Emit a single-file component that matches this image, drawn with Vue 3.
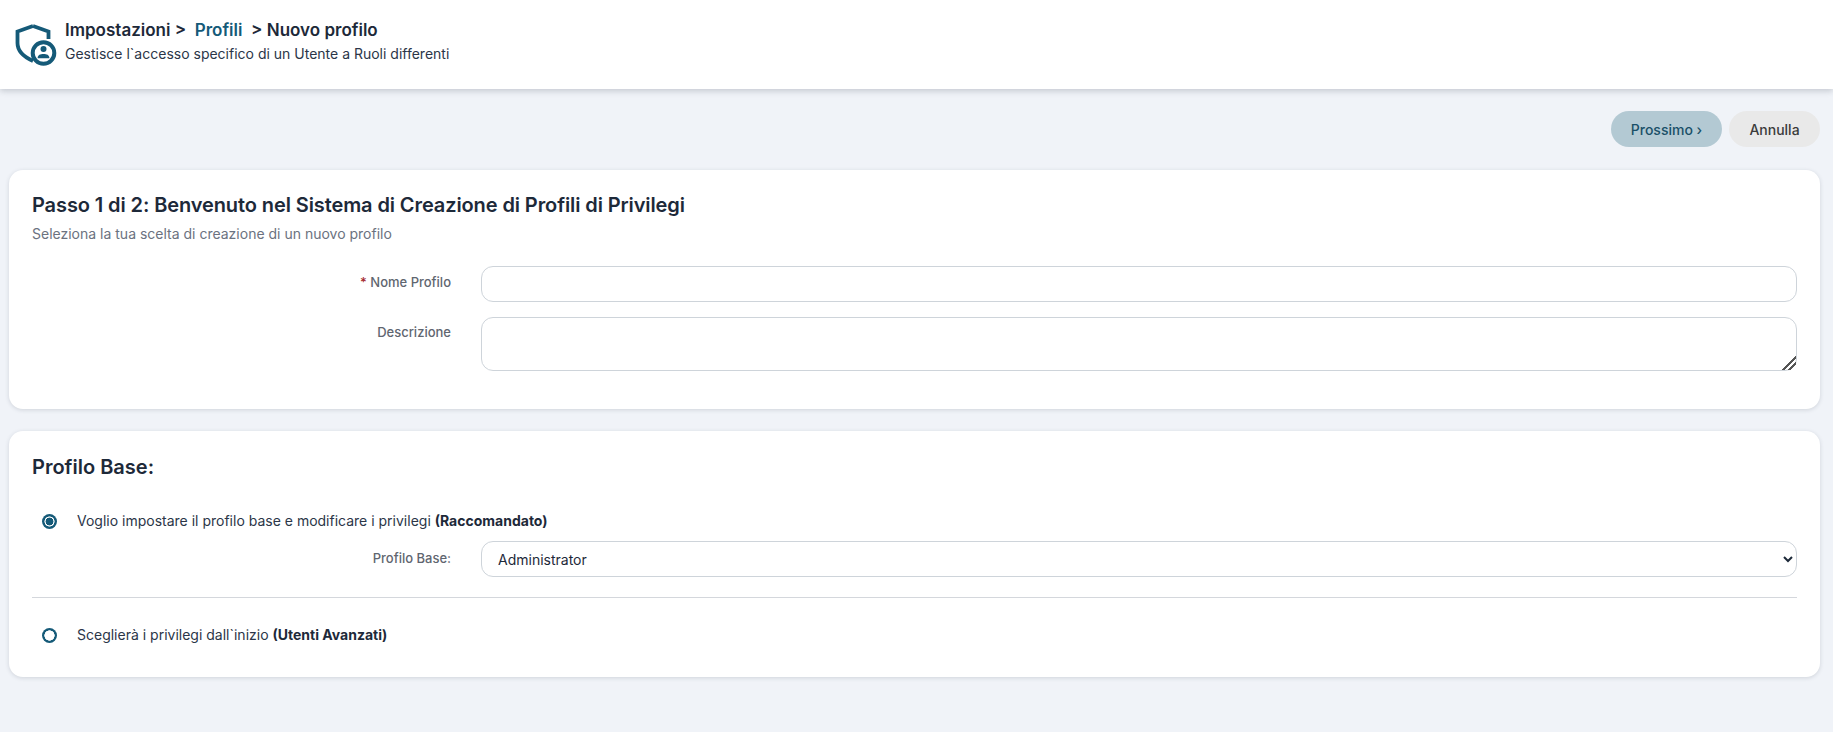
<script setup>
import { ref } from 'vue'
const baseChoice = ref('base')
const profiles = ['Administrator', 'Standard User']
</script>

<template>
  <div class="page">
    <header class="topbar">
      <svg class="shield" viewBox="0 0 42 42" width="42" height="42" fill="none">
        <path d="M18 2 L33.5 7.5 V15 M18 2 L2.5 7.5 V19 C2.5 27 9 33 18 37" stroke="#155a78" stroke-width="3.8" stroke-linejoin="miter" />
        <circle cx="28.5" cy="29" r="10.8" fill="#fff" stroke="#155a78" stroke-width="4" />
        <circle cx="28.5" cy="25" r="3" fill="#155a78" />
        <path d="M22.6 34.2 C22.6 30.9 25.4 30 28.5 30 C31.6 30 34.4 30.9 34.4 34.2 Z" fill="#155a78" />
      </svg>
      <div class="topbar-text">
        <div class="crumbs">Impostazioni &gt; <a class="crumb-link">&nbsp;Profili&nbsp;</a> &gt; Nuovo profilo</div>
        <div class="subtitle">Gestisce l`accesso specifico di un Utente a Ruoli differenti</div>
      </div>
    </header>

    <main class="content">
      <div class="actions">
        <button class="btn next">Prossimo ›</button>
        <button class="btn cancel">Annulla</button>
      </div>

      <section class="card step">
        <h2 class="step-title">Passo 1 di 2: Benvenuto nel Sistema di Creazione di Profili di Privilegi</h2>
        <p class="hint">Seleziona la tua scelta di creazione di un nuovo profilo</p>
        <div class="field">
          <label><span class="req">*</span> Nome Profilo</label>
          <input type="text" />
        </div>
        <div class="field">
          <label>Descrizione</label>
          <textarea></textarea>
        </div>
      </section>

      <section class="card base">
        <h2>Profilo Base:</h2>
        <label class="option first">
          <input v-model="baseChoice" type="radio" name="base" value="base" />
          <span>Voglio impostare il profilo base e modificare i privilegi <b>(Raccomandato)</b></span>
        </label>
        <div class="field select-field">
          <label>Profilo Base:</label>
          <select>
            <option v-for="p in profiles" :key="p">{{ p }}</option>
          </select>
        </div>
        <hr />
        <label class="option">
          <input v-model="baseChoice" type="radio" name="base" value="scratch" />
          <span>Sceglierà i privilegi dall`inizio <b>(Utenti Avanzati)</b></span>
        </label>
      </section>
    </main>
  </div>
</template>

<style>
html, body { background: #f0f3f8; }
</style>

<style scoped>
.page { font-family: Inter, "Liberation Sans", sans-serif; color: #1d2939; min-height: 732px; background: #f0f3f8; }

.topbar { height: 89px; box-sizing: border-box; background: #fff; display: flex; align-items: center; gap: 8px; padding: 0 0 0 15px; box-shadow: 0 2px 6px rgba(40, 50, 70, 0.22); }
.shield { flex: none; }
.topbar-text { padding-bottom: 5px; }
.crumbs { font-size: 17px; font-weight: 600; line-height: 20px; color: #1d2939; white-space: pre-wrap; }
.crumb-link { color: #155a78; }
.subtitle { font-size: 14px; line-height: 20px; margin-top: 4px; color: #2b3648; }

.content { padding: 22px 13px 0 9px; }
.actions { display: flex; justify-content: flex-end; gap: 7px; }
.btn { height: 36px; border: 0; border-radius: 18px; font: 500 14px Inter, sans-serif; cursor: pointer; }
.next { width: 111px; background: #b3c9d3; color: #1a5068; }
.cancel { width: 91px; background: #e9e9e9; color: #3b3b3b; }

.card { background: #fff; border-radius: 14px; box-shadow: 0 1px 4px rgba(40, 50, 70, 0.16); padding: 0 23px; }
.step { margin-top: 23px; height: 239px; box-sizing: border-box; padding-top: 23px; }
.base { margin-top: 22px; height: 246px; box-sizing: border-box; padding-top: 24px; }
h2 { margin: 0; font-size: 20px; font-weight: 600; line-height: 24px; color: #1d2939; }
.step-title { letter-spacing: -0.1px; }
.hint { margin: 7px 0 0; font-size: 14px; line-height: 20px; color: #6b7280; }

.field { display: flex; gap: 30px; align-items: flex-start; margin-top: 15px; }
.step .hint + .field { margin-top: 22px; }
.field label { width: 419px; text-align: right; font-size: 13px; font-weight: 500; line-height: 32px; color: #5f6670; flex: none; }
.step .field:last-child label { line-height: 30px; }
.req { color: #a4262c; }
input[type="text"], textarea, select { flex: 1; min-width: 0; height: 36px; box-sizing: border-box; border: 1px solid #ced4da; border-radius: 12px; background: #fff; font: 14px Inter, sans-serif; color: #1d2939; padding: 0 16px; outline: none; }
select { padding: 0 8px 0 12px; }
textarea { height: 54px; padding: 8px 16px; resize: vertical; display: block; }
textarea::-webkit-resizer { background: linear-gradient(135deg, transparent 0 52%, #555 52% 60%, transparent 60% 72%, #555 72% 80%, transparent 80%); }

.option { display: flex; align-items: center; font-size: 14px; line-height: 20px; color: #2b3648; }
.option input { appearance: none; width: 15px; height: 15px; margin: 0 20px 0 10px; border-radius: 50%; background: radial-gradient(circle, #fff 0 4.9px, #155a78 5.4px); flex: none; }
.option input:checked { background: radial-gradient(circle, #155a78 0 3.7px, #fff 4.2px 4.8px, #155a78 5.3px); }
.option b { font-weight: 700; color: #1d2939; }
.first { margin-top: 32px; }
.select-field { margin-top: 10px; }
.select-field label { line-height: 34px; }
hr { border: 0; border-top: 1px solid #d4d7dc; margin: 20px 0 27px; }
</style>
